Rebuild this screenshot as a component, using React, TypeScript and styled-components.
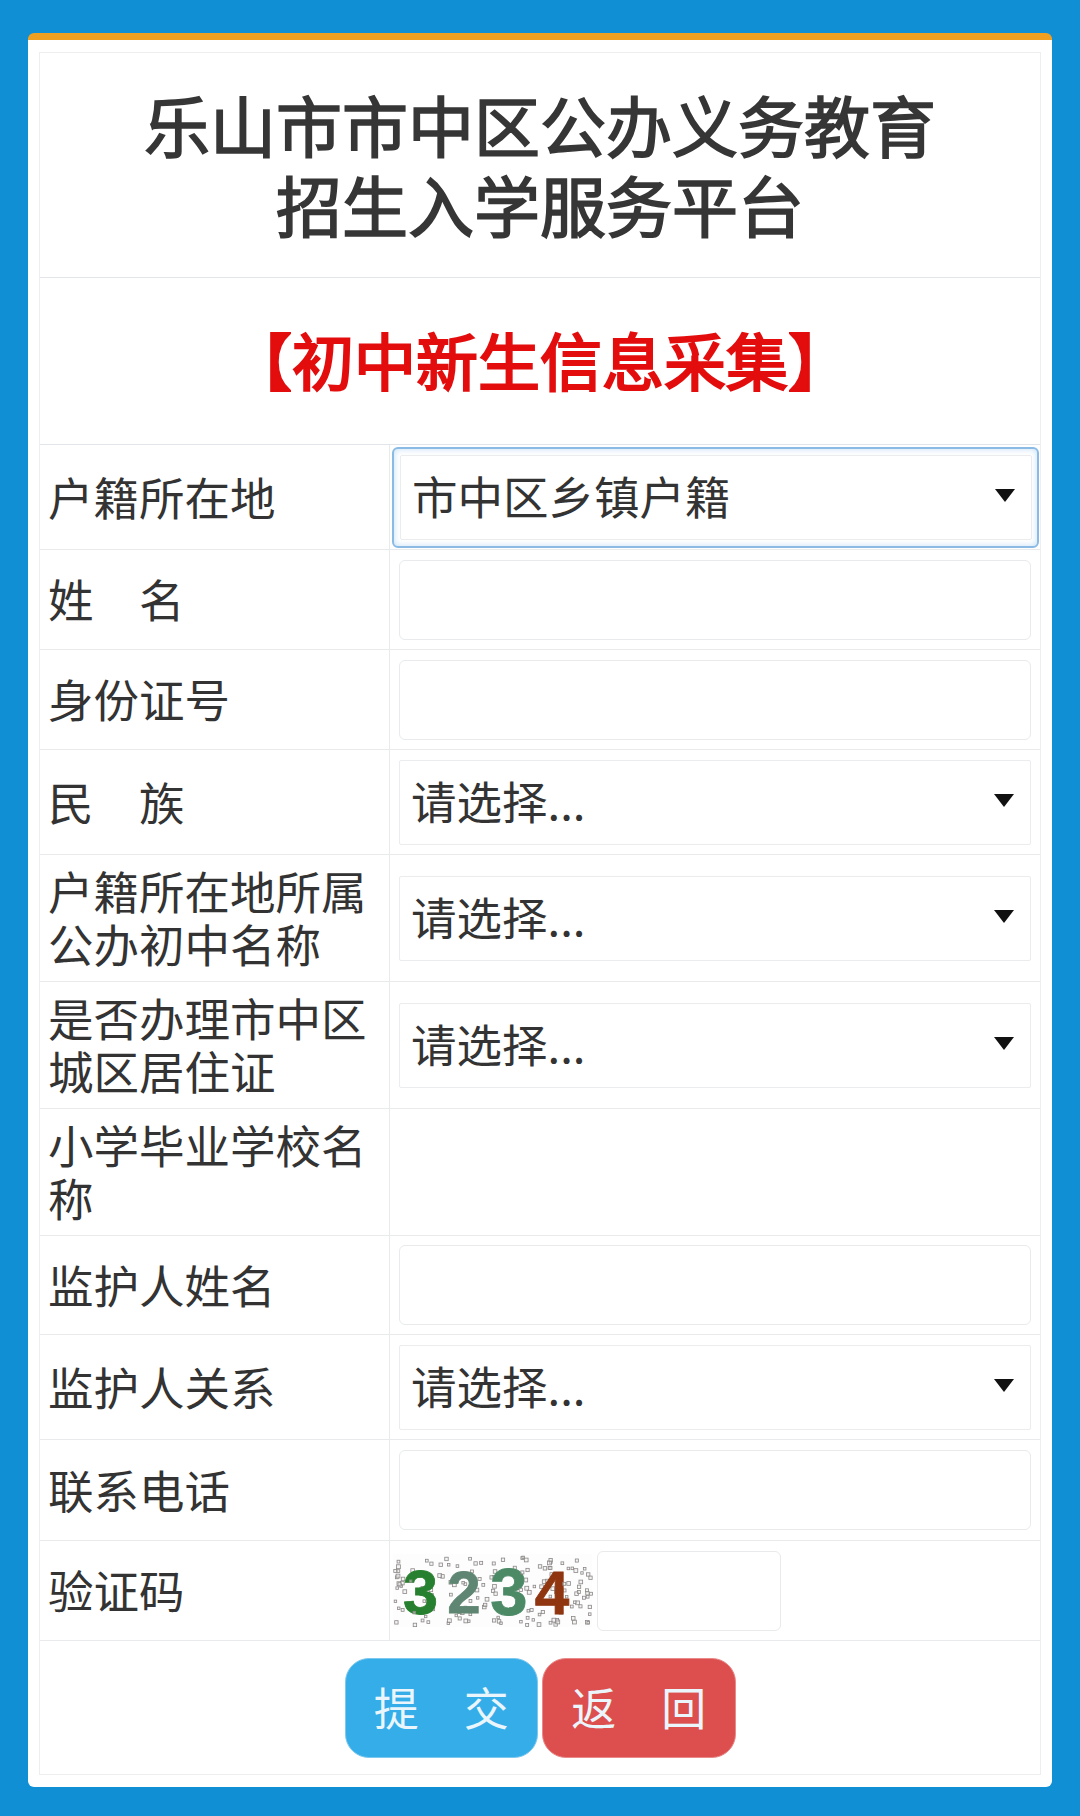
import React from "react";
import styled, { createGlobalStyle } from "styled-components";

const Global = createGlobalStyle`
  html, body { margin: 0; padding: 0; background: #118fd4; }
  * { box-sizing: border-box; }
  body { font-family: "Noto Sans CJK SC", "Liberation Sans", sans-serif; color: #333; }
`;

const Page = styled.div`
  width: 1080px;
  height: 1816px;
  padding: 33px 28px 29px;
  background: #118fd4;
`;

const Card = styled.main`
  height: 100%;
  padding: 12px;
  background: #fff;
  border-top: 7px solid #f0a020;
  border-radius: 6px;
`;

const Table = styled.div`
  display: flex;
  flex-direction: column;
  margin: 0 -1px;
  border: 1px solid #eceef0;
`;

const Heading = styled.div<{ $h: number }>`
  height: ${(p) => p.$h}px;
  display: flex;
  align-items: center;
  justify-content: center;
  text-align: center;
  border-bottom: 1px solid #e2e5ea;
`;

const Title = styled.h1`
  margin: 0 0 4px;
  font-size: 66px;
  line-height: 80px;
  font-weight: 400;
  -webkit-text-stroke: 1.7px #363636;
  color: #363636;
`;

const Subtitle = styled.h2`
  margin: 0 0 4px;
  font-size: 62px;
  line-height: 76px;
  font-weight: 400;
  -webkit-text-stroke: 2.2px #e30d0d;
  color: #e30d0d;
`;

const Row = styled.div<{ $h: number }>`
  height: ${(p) => p.$h}px;
  display: grid;
  grid-template-columns: 350px 1fr;
  border-bottom: 1px solid #e8eaec;
`;

const Label = styled.div`
  padding: 0 8px 2px 8px;
  display: flex;
  align-items: center;
  font-size: 45.5px;
  line-height: 53px;
  word-spacing: 2px;
  border-right: 1px solid #e8eaec;
`;

const Field = styled.div`
  padding: 0 9px;
  display: flex;
  align-items: center;
  min-width: 0;
`;

const TextBox = styled.div<{ $w?: number }>`
  width: ${(p) => (p.$w ? `${p.$w}px` : "100%")};
  height: 80px;
  flex: none;
  background: #fff;
  border: 1px solid #e8eaec;
  border-radius: 6px;
`;

const SelectBox = styled.div`
  width: 100%;
  height: 85px;
  padding: 0 16px 4px 11px;
  display: flex;
  align-items: center;
  justify-content: space-between;
  font-size: 45.5px;
  background: #fff;
  border: 1px solid #eaecee;
  border-radius: 2px;
`;

const Arrow = styled.span`
  width: 0;
  height: 0;
  border-left: 10px solid transparent;
  border-right: 10px solid transparent;
  border-top: 13px solid #111;
`;

const FocusRing = styled.div`
  width: 647px;
  margin-left: -7px;
  flex: none;
  padding: 6px 5px 6px 6px;
  border: 2px solid #8bbae4;
  border-radius: 6px;
  box-shadow: inset 0 0 6px rgba(102, 175, 233, 0.4);
`;

const CaptchaField = styled(Field)`
  padding-left: 3px;
  gap: 5px;
`;

const Actions = styled.div<{ $h: number }>`
  height: ${(p) => p.$h}px;
  display: flex;
  align-items: center;
  justify-content: center;
  gap: 4px;
`;

const ActionButton = styled.button<{ $bg: string; $edge: string }>`
  width: 193.5px;
  height: 100px;
  padding: 0 0 2px;
  font-family: inherit;
  font-size: 45px;
  word-spacing: 7px;
  color: #eaf6fb;
  background: ${(p) => p.$bg};
  border: 1px solid ${(p) => p.$edge};
  border-radius: 24px;
`;

const CaptchaSvg = styled.svg`
  flex: none;
  display: block;
  overflow: visible;
`;

const noise = (() => {
  let s = 3234;
  const r = () => {
    s = (s * 16807) % 2147483647;
    return s / 2147483647;
  };
  return Array.from({ length: 165 }, () => ({ x: r() * 197, y: r() * 68 + 2, z: 2.4 + r() * 1.5 }));
})();

const digits = [
  { ch: "3", x: 27.5, y: 60, size: 63, fill: "#27802f" },
  { ch: "2", x: 71, y: 59, size: 60, fill: "#5f8672" },
  { ch: "3", x: 116, y: 61, size: 67, fill: "#4c8a66" },
  { ch: "4", x: 159, y: 60, size: 62, fill: "#8f3610" },
];

function Speck({ x, y, z }: { x: number; y: number; z: number }) {
  return <rect x={x} y={y} width={z} height={z} fill="#ececec" fillOpacity={0.5} stroke="#8c8887" strokeWidth={0.8} />;
}

function Captcha() {
  return (
    <CaptchaSvg width={199} height={73} viewBox="0 0 199 73">
      <rect width={199} height={73} fill="#fdfdfd" />
      {noise.map((n, i) => (i % 7 ? <Speck key={i} {...n} /> : null))}
      <g fontFamily="'Liberation Sans', sans-serif" fontWeight={700} textAnchor="middle" strokeWidth={0.8}>
        {digits.map((d, i) => (
          <text key={i} x={d.x} y={d.y} fontSize={d.size} fill={d.fill} stroke={d.fill}>
            {d.ch}
          </text>
        ))}
      </g>
      {noise.map((n, i) => (i % 7 ? null : <Speck key={i} {...n} />))}
    </CaptchaSvg>
  );
}

const Select = ({ value }: { value: string }) => (
  <SelectBox>
    {value}
    <Arrow />
  </SelectBox>
);

const placeholder = "请选择...";

export default function App() {
  return (
    <>
      <Global />
      <Page>
        <Card>
          <Table>
            <Heading $h={225}>
              <Title>
                乐山市市中区公办义务教育
                <br />
                招生入学服务平台
              </Title>
            </Heading>
            <Heading $h={167}>
              <Subtitle>【初中新生信息采集】</Subtitle>
            </Heading>
            <Row $h={105}>
              <Label>户籍所在地</Label>
              <Field>
                <FocusRing>
                  <Select value="市中区乡镇户籍" />
                </FocusRing>
              </Field>
            </Row>
            <Row $h={100}>
              <Label>姓　名</Label>
              <Field><TextBox /></Field>
            </Row>
            <Row $h={100}>
              <Label>身份证号</Label>
              <Field><TextBox /></Field>
            </Row>
            <Row $h={105}>
              <Label>民　族</Label>
              <Field><Select value={placeholder} /></Field>
            </Row>
            <Row $h={127}>
              <Label>户籍所在地所属公办初中名称</Label>
              <Field><Select value={placeholder} /></Field>
            </Row>
            <Row $h={127}>
              <Label>是否办理市中区城区居住证</Label>
              <Field><Select value={placeholder} /></Field>
            </Row>
            <Row $h={127}>
              <Label>小学毕业学校名称</Label>
              <Field />
            </Row>
            <Row $h={99}>
              <Label>监护人姓名</Label>
              <Field><TextBox /></Field>
            </Row>
            <Row $h={105}>
              <Label>监护人关系</Label>
              <Field><Select value={placeholder} /></Field>
            </Row>
            <Row $h={101}>
              <Label>联系电话</Label>
              <Field><TextBox /></Field>
            </Row>
            <Row $h={100}>
              <Label>验证码</Label>
              <CaptchaField>
                <Captcha />
                <TextBox $w={184} />
              </CaptchaField>
            </Row>
            <Actions $h={133}>
              <ActionButton $bg="#35ade9" $edge="#7cc8ee">提　交</ActionButton>
              <ActionButton $bg="#dd4f4f" $edge="#e88a8a">返　回</ActionButton>
            </Actions>
          </Table>
        </Card>
      </Page>
    </>
  );
}
